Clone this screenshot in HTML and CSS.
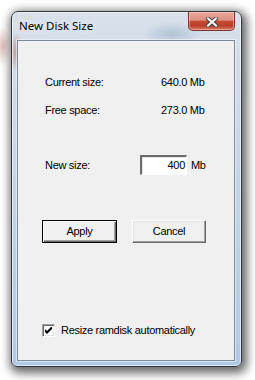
FILE: index.html
```html
<!DOCTYPE html>
<html>
<head>
<meta charset="utf-8">
<link rel="stylesheet" href="styles.css">
</head>
<body>
<div class="window">
  <div class="titlebar">
    <span class="title">New Disk Size</span>
    <div class="close">
      <svg width="12" height="10" viewBox="0 0 12 10">
        <path d="M2 1.5 L10 8.5 M10 1.5 L2 8.5" stroke="#3a3a3a" stroke-width="4" stroke-linecap="square" fill="none"/>
        <path d="M2 1.5 L10 8.5 M10 1.5 L2 8.5" stroke="#ffffff" stroke-width="2.2" stroke-linecap="square" fill="none"/>
      </svg>
    </div>
  </div>
  <div class="client">
    <div class="info-row"><span class="label">Current size:</span><span>640.0 Mb</span></div>
    <div class="info-row second"><span class="label">Free space:</span><span>273.0 Mb</span></div>
    <div class="size-row">
      <span class="size-label">New size:</span>
      <div class="input">400</div>
      <span class="unit">Mb</span>
    </div>
    <div class="buttons">
      <div class="btn default">Apply</div>
      <div class="btn">Cancel</div>
    </div>
    <div class="check-row">
      <div class="checkbox">
        <svg width="7" height="7" viewBox="0 0 7 7"><path d="M0 2 L2 4 L6 0 L7 0 L7 2 L2 7 L0 5 Z" fill="#000"/></svg>
      </div>
      <span class="check-label">Resize ramdisk automatically</span>
    </div>
  </div>
</div>
</body>
</html>
```

FILE: styles.css
```css
html, body {
  margin: 0;
  padding: 0;
}
body {
  width: 255px;
  height: 380px;
  overflow: hidden;
  background:
    radial-gradient(ellipse 9px 20px at 3px 46px, rgba(160, 70, 60, 0.35), rgba(160, 70, 60, 0) 100%),
    #ffffff;
  padding: 11px 0 0 11px;
  box-sizing: border-box;
}
.window {
  width: 231px;
  height: 356px;
  box-sizing: border-box;
  border: 1px solid #34383d;
  border-radius: 7px 7px 6px 6px;
  padding: 0 6px 5px 5px;
  display: flex;
  flex-direction: column;
  background:
    radial-gradient(ellipse 8px 20px at 4px 40px, rgba(170, 80, 70, 0.45), rgba(170, 80, 70, 0) 100%),
    radial-gradient(ellipse 30px 12px at 160px 22px, rgba(150, 170, 195, 0.55), rgba(150, 170, 195, 0) 100%),
    linear-gradient(180deg, #d8e1eb 0%, #ccd9e8 30%, #bbd1e8 70%, #afcae7 100%);
  box-shadow: 2px 3px 10px 3px rgba(0, 0, 0, 0.6), inset 0 0 0 1px rgba(255, 255, 255, 0.55);
}
.titlebar {
  height: 28px;
  display: flex;
  justify-content: space-between;
  align-items: flex-start;
}
.title {
  font-family: "Noto Sans", sans-serif;
  font-size: 11.5px;
  line-height: 16px;
  margin-top: 6px;
  padding-left: 2px;
  color: #000;
  text-shadow: 0 0 6px rgba(255, 255, 255, 0.9);
}
.close {
  width: 47px;
  height: 19px;
  box-sizing: border-box;
  border: 1px solid #7a3328;
  border-top: none;
  border-radius: 0 0 5px 5px;
  background: linear-gradient(180deg, #e7aa9e 0%, #dc8f80 45%, #c54a36 52%, #bb3d2a 75%, #d67a64 100%);
  box-shadow: inset 0 0 0 1px rgba(255, 220, 210, 0.45);
  display: flex;
  align-items: center;
  justify-content: center;
}
.close svg {
  display: block;
  margin-top: 1px;
}
.client {
  flex: 1;
  background: #f0f0f0;
  border: 1px solid #7c8998;
  box-shadow: 0 0 0 1px rgba(255, 255, 255, 0.5);
  padding: 35px 0 0 24px;
  font-family: "Liberation Sans", Arial, sans-serif;
  font-size: 11px;
  letter-spacing: -0.3px;
  color: #000;
  display: flex;
  flex-direction: column;
  align-items: flex-start;
}
.info-row {
  display: flex;
  height: 13px;
  line-height: 13px;
  padding-left: 3px;
}
.info-row.second {
  margin-top: 15px;
}
.label {
  width: 116px;
}
.size-row {
  margin-top: 38px;
  padding-left: 3px;
  height: 20px;
  display: flex;
  align-items: center;
  line-height: 13px;
}
.size-label {
  width: 95px;
}
.input {
  width: 47px;
  height: 20px;
  box-sizing: border-box;
  background: #fff;
  border-style: solid;
  border-width: 2px 1px 1px 2px;
  border-color: #6d6d6d #ffffff #ffffff #6d6d6d;
  box-shadow: 1px 1px 0 0 #e3e3e3 inset;
  text-align: right;
  padding-right: 1px;
  line-height: 16px;
}
.unit {
  margin-left: 4px;
}
.buttons {
  margin-top: 45px;
  display: flex;
  gap: 15px;
}
.btn {
  width: 74px;
  height: 23px;
  box-sizing: border-box;
  background: #f0f0f0;
  border-style: solid;
  border-width: 1px;
  border-color: #ffffff #696969 #696969 #ffffff;
  box-shadow: inset -1px -1px 0 0 #a0a0a0, inset 1px 1px 0 0 #e3e3e3;
  text-align: center;
  line-height: 20px;
}
.btn.default {
  width: 75px;
  border: 1px solid #000;
  box-shadow: inset 1px 1px 0 0 #ffffff, inset -1px -1px 0 0 #696969, inset -2px -2px 0 0 #a0a0a0;
}
.check-row {
  margin-top: 81px;
  display: flex;
  align-items: center;
  height: 13px;
  line-height: 13px;
}
.checkbox {
  width: 13px;
  height: 13px;
  box-sizing: border-box;
  background: #fff;
  border-style: solid;
  border-width: 1px;
  border-color: #a0a0a0 #ffffff #ffffff #a0a0a0;
  box-shadow: inset 1px 1px 0 0 #696969, inset -1px -1px 0 0 #e3e3e3;
  display: flex;
  align-items: center;
  justify-content: center;
}
.checkbox svg {
  display: block;
}
.check-label {
  margin-left: 6px;
}
```
